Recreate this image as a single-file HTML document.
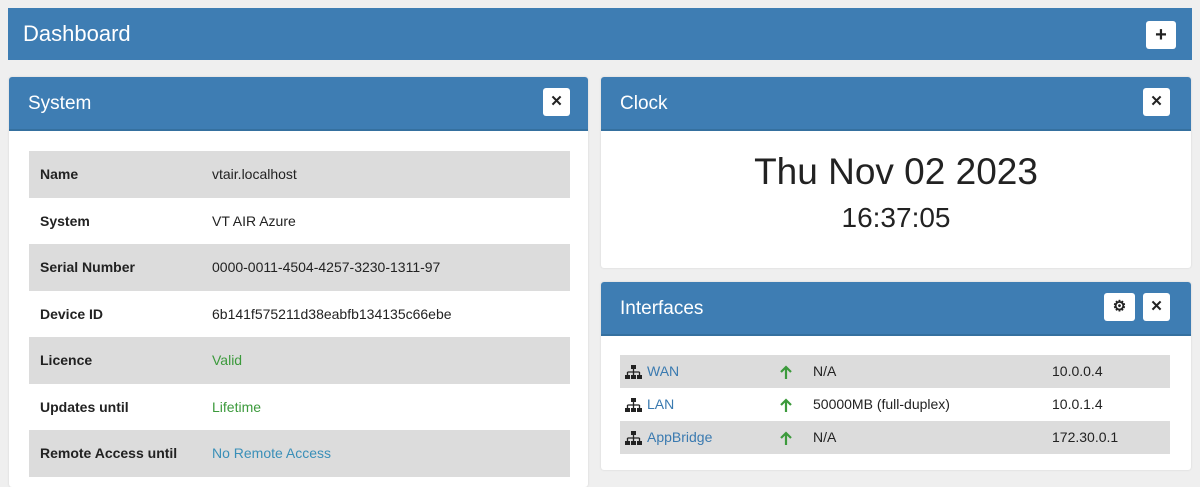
<!DOCTYPE html>
<html><head><style>
*{margin:0;padding:0;box-sizing:border-box}
body{width:1200px;height:476px;background:#efefef;font-family:"Liberation Sans",sans-serif;position:relative;overflow:hidden;color:#222}
.abs{position:absolute}
.bar{background:#3e7db3;color:#fff}
.panel{position:absolute;background:#fff;border-radius:3px;overflow:hidden;box-shadow:0 0 2px rgba(0,0,0,.12)}
.ph{height:54px;background:#3e7db3;color:#fff;font-size:19px;padding-left:19px;line-height:54px;position:relative;border-bottom:2px solid #35709f}
.btn{position:absolute;top:11px;width:27px;height:28px;background:#fff;border-radius:3px;color:#222;font-weight:bold;font-size:15px;text-align:center;line-height:28px}
.row{position:absolute;left:20px;width:541px;height:46.5px;font-size:14px;line-height:46.5px}
.row.g{background:#dcdcdc}
.row b{position:absolute;left:11px}
.row span{position:absolute;left:183px}
.ir{position:absolute;left:19px;width:550px;height:33px;font-size:14px;line-height:33px}
.ir.g{background:#dcdcdc}
.ir span{position:absolute}
.ir svg{position:absolute}
a{color:#3a7ab0}
</style></head><body>
<div class="abs bar" style="left:8px;top:8px;width:1184px;height:52px;font-size:22px;line-height:52px;padding-left:15px">Dashboard
<div class="btn" style="left:1138px;top:13px;width:30px;height:28px;font-size:20px;line-height:28px">+</div></div>

<div class="panel" style="left:9px;top:77px;width:579px;height:410px">
<div class="ph">System<div class="btn" style="left:534px">✕</div></div>
<div class="row g" style="top:74px"><b>Name</b><span>vtair.localhost</span></div>
<div class="row" style="top:120.5px"><b>System</b><span>VT AIR Azure</span></div>
<div class="row g" style="top:167px"><b>Serial Number</b><span>0000-0011-4504-4257-3230-1311-97</span></div>
<div class="row" style="top:213.5px"><b>Device ID</b><span>6b141f575211d38eabfb134135c66ebe</span></div>
<div class="row g" style="top:260px"><b>Licence</b><span style="color:#3c9a3c">Valid</span></div>
<div class="row" style="top:306.5px"><b>Updates until</b><span style="color:#3c9a3c">Lifetime</span></div>
<div class="row g" style="top:353px"><b>Remote Access until</b><span style="color:#3a8fb8">No Remote Access</span></div>
</div>

<div class="panel" style="left:601px;top:77px;width:590px;height:191px">
<div class="ph">Clock<div class="btn" style="left:542px">✕</div></div>
<div class="abs" style="left:0;width:590px;top:74px;text-align:center;font-size:37px">Thu Nov 02 2023</div>
<div class="abs" style="left:0;width:590px;top:125px;text-align:center;font-size:28px">16:37:05</div>
</div>

<svg width="0" height="0" style="position:absolute"><defs>
<g id="net"><rect x="6" y="0" width="5" height="4" fill="#222"/><path d="M8.5 4v3M2.5 7h12M2.5 7v4M8.5 7v4M14.5 7v4" stroke="#222" stroke-width="1.3" fill="none"/><rect x="0" y="10" width="5" height="4" fill="#222"/><rect x="6" y="10" width="5" height="4" fill="#222"/><rect x="12" y="10" width="5" height="4" fill="#222"/></g>
<g id="up"><path d="M7 14V2M2 7l5-5 5 5" stroke="#3c9a3c" stroke-width="2.2" fill="none"/></g>
</defs></svg>

<div class="panel" style="left:601px;top:282px;width:590px;height:188px">
<div class="ph">Interfaces<div class="btn" style="left:503px;width:31px">⚙</div><div class="btn" style="left:542px">✕</div></div>
<div class="ir g" style="top:73px"><svg style="left:5px;top:10px" width="17" height="14"><use href="#net"/></svg><span style="left:27px"><a>WAN</a></span><svg style="left:159px;top:10px" width="14" height="15"><use href="#up"/></svg><span style="left:193px">N/A</span><span style="left:432px">10.0.0.4</span></div>
<div class="ir" style="top:106px"><svg style="left:5px;top:10px" width="17" height="14"><use href="#net"/></svg><span style="left:27px"><a>LAN</a></span><svg style="left:159px;top:10px" width="14" height="15"><use href="#up"/></svg><span style="left:193px">50000MB (full-duplex)</span><span style="left:432px">10.0.1.4</span></div>
<div class="ir g" style="top:139px"><svg style="left:5px;top:10px" width="17" height="14"><use href="#net"/></svg><span style="left:27px"><a>AppBridge</a></span><svg style="left:159px;top:10px" width="14" height="15"><use href="#up"/></svg><span style="left:193px">N/A</span><span style="left:432px">172.30.0.1</span></div>
</div>
</body></html>
